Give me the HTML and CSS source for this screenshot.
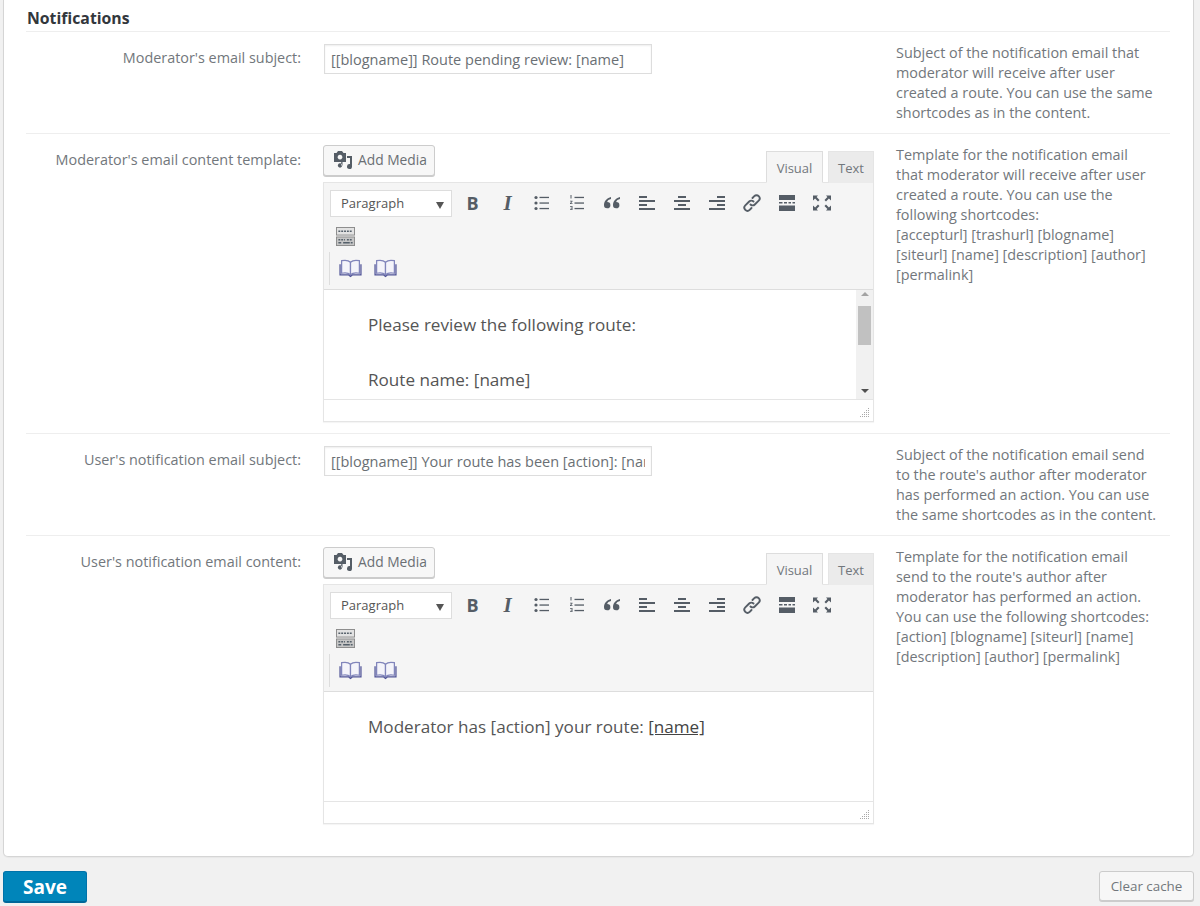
FILE: index.html
```html
<!DOCTYPE html>
<html lang="en">
<head>
<meta charset="utf-8">
<title>Notifications</title>
<link rel="stylesheet" href="styles.css">
</head>
<body>
<svg class="defs" width="0" height="0" aria-hidden="true">
  <defs>
    <symbol id="i-media" viewBox="0 0 20 20"><path fill-rule="evenodd" d="M1 3h2.500L5 1h4l1.500 2H13v9H1zM7 4.700a2.400 2.400 0 1 0 .01 0z" fill="#555d66"/><path d="M7 13.300a2.200 2.200 0 1 0 .01 0zM8.200 11h1.300v4.500H8.200z" fill="#555d66"/><path d="M14 6h5v10.500a2.500 2.500 0 1 1-2-2.400V8h-3z" fill="#555d66"/></symbol>
    <symbol id="i-ul" viewBox="0 0 20 20"><g fill="#555d66"><circle cx="4" cy="4.500" r="1.600"/><circle cx="4" cy="10" r="1.600"/><circle cx="4" cy="15.500" r="1.600"/><rect x="7.500" y="3.800" width="9.500" height="1.300"/><rect x="7.500" y="9.400" width="9.500" height="1.300"/><rect x="7.500" y="14.900" width="9.500" height="1.300"/></g></symbol>
    <symbol id="i-ol" viewBox="0 0 20 20"><g fill="#555d66"><rect x="7.500" y="3.800" width="9.500" height="1.300"/><rect x="7.500" y="9.400" width="9.500" height="1.300"/><rect x="7.500" y="14.900" width="9.500" height="1.300"/><path d="M3.500 2h1v3.500h-1zM3 7.800h2.500v.8L4 10.200h1.500v.8H3v-.8l1.500-1.600H3zM3 13h2.500v4H3v-.7h1.700v-.9H3.600v-.7h1.100v-.9H3z"/></g></symbol>
    <symbol id="i-quote" viewBox="0 0 20 20"><path d="M9 4C5.500 5 2 7.500 2 12a3.200 3.200 0 1 0 3.200-3.100C5.400 7.500 7 6.500 9 6zM18 4c-3.500 1-7 3.500-7 8a3.200 3.200 0 1 0 3.200-3.100c.2-1.400 1.800-2.400 3.800-2.900z" fill="#555d66"/></symbol>
    <symbol id="i-left" viewBox="0 0 20 20"><path d="M2 2h8v2H2zM2 6h16v2H2zM2 10h8v2H2zM2 14h16v2H2z" fill="#555d66" transform="translate(0 1)"/></symbol>
    <symbol id="i-center" viewBox="0 0 20 20"><path d="M6 2h8v2H6zM2 6h16v2H2zM6 10h8v2H6zM2 14h16v2H2z" fill="#555d66" transform="translate(0 1)"/></symbol>
    <symbol id="i-right" viewBox="0 0 20 20"><path d="M10 2h8v2h-8zM2 6h16v2H2zM10 10h8v2h-8zM2 14h16v2H2z" fill="#555d66" transform="translate(0 1)"/></symbol>
    <symbol id="i-link" viewBox="0 0 20 20"><g fill="none" stroke="#555d66" stroke-width="1.900" stroke-linecap="round"><path d="M8.500 11.500a3 3 0 0 0 4.300 0l3.900-3.900a3.100 3.100 0 0 0-4.400-4.400l-1.800 1.800"/><path d="M11.500 8.500a3 3 0 0 0-4.300 0l-3.900 3.900a3.100 3.100 0 0 0 4.400 4.400l1.800-1.800"/></g></symbol>
    <symbol id="i-more" viewBox="0 0 20 20"><path d="M2 2h16v5H2zM2 12.500h16v5.500H2zM2 9h3.500v1.600H2zM7 9h3v1.600H7zM11.500 9H14v1.600h-2.500zM15.500 9H18v1.600h-2.500z" fill="#555d66"/></symbol>
    <symbol id="i-full" viewBox="0 0 20 20"><path d="M1 2.500h5L4.600 4 7.500 7 6 8.500 3.100 5.400 1 7.500zM19 2.500v5l-2.100-2.100L14 8.500 12.500 7l2.900-3L14 2.500zM1 17.500v-5l2.100 2.100L6 11.500 7.500 13l-2.900 3L6 17.500zM19 17.500h-5l1.400-1.500-2.900-3 1.500-1.500 2.900 3.100 2.100-2.100z" fill="#555d66"/></symbol>
    <symbol id="i-kitchen" viewBox="0 0 20 20"><rect x="0.500" y="0.500" width="19" height="8" fill="#e2e2e2" stroke="#8a8a8a"/><rect x="0.500" y="10.500" width="19" height="9" fill="#c6c6c6" stroke="#8a8a8a"/><path d="M2.500 4.500h15M2.500 13.500h7m2 0h6" stroke="#55606a" stroke-width="1.500" stroke-dasharray="2 1" fill="none"/><path d="M2.500 16.500h3m2 0h7m1 0h2" stroke="#55606a" stroke-width="1.500" fill="none"/></symbol>
    <symbol id="i-book" viewBox="0 0 22 20"><g fill="#f4f4fa" stroke="#8185bb" stroke-width="1.200"><path d="M11 5C9 3 5 3 2.500 3.500V15.500C5 15 9 15 11 17z"/><path d="M11 5c2-2 6-2 8.500-1.500V15.500C17 15 13 15 11 17z"/></g><path d="M1 7v10h8l2 1.500 2-1.500h8V7" fill="none" stroke="#4e5296" stroke-width="1.200"/></symbol>
    <symbol id="i-grip" viewBox="0 0 10 10"><g fill="#a9a9a9"><rect x="8" y="0" width="1" height="1"/><rect x="6" y="2" width="1" height="1"/><rect x="8" y="2" width="1" height="1"/><rect x="4" y="4" width="1" height="1"/><rect x="6" y="4" width="1" height="1"/><rect x="8" y="4" width="1" height="1"/><rect x="2" y="6" width="1" height="1"/><rect x="4" y="6" width="1" height="1"/><rect x="6" y="6" width="1" height="1"/><rect x="8" y="6" width="1" height="1"/><rect x="0" y="8" width="1" height="1"/><rect x="2" y="8" width="1" height="1"/><rect x="4" y="8" width="1" height="1"/><rect x="6" y="8" width="1" height="1"/><rect x="8" y="8" width="1" height="1"/></g></symbol>
  </defs>
</svg>

<main class="card">
  <h2 class="section-title">Notifications</h2>

  <section class="row">
    <label class="label">Moderator's email subject:</label>
    <div class="control"><input class="text-input" type="text" value="[[blogname]] Route pending review: [name]"></div>
    <p class="help">Subject of the notification email that moderator will receive after user created a route. You can use the same shortcodes as in the content.</p>
  </section>

  <section class="row">
    <label class="label">Moderator's email content template:</label>
    <div class="control">
      <div class="editor-head">
        <button class="media-btn" type="button"><svg class="media-icon"><use href="#i-media"/></svg>Add Media</button>
        <div class="tabs"><span class="tab tab-active">Visual</span><span class="tab">Text</span></div>
      </div>
      <div class="editor">
        <div class="toolbar">
          <div class="toolbar-line">
            <div class="format">Paragraph<span class="caret"></span></div>
            <span class="tb tb-b">B</span><span class="tb tb-i">I</span>
            <svg class="tb-icon"><use href="#i-ul"/></svg><svg class="tb-icon"><use href="#i-ol"/></svg><svg class="tb-icon"><use href="#i-quote"/></svg><svg class="tb-icon"><use href="#i-left"/></svg><svg class="tb-icon"><use href="#i-center"/></svg><svg class="tb-icon"><use href="#i-right"/></svg><svg class="tb-icon"><use href="#i-link"/></svg><svg class="tb-icon"><use href="#i-more"/></svg><svg class="tb-icon"><use href="#i-full"/></svg>
          </div>
          <div class="toolbar-line line-kitchen"><svg class="kitchen"><use href="#i-kitchen"/></svg></div>
          <div class="toolbar-line line-books"><svg class="book"><use href="#i-book"/></svg><svg class="book"><use href="#i-book"/></svg></div>
        </div>
        <div class="content content-scroll">
          <div class="content-text">
            <p>Please review the following route:</p>
            <p>Route name: [name]</p>
          </div>
          <div class="scrollbar"><span class="arrow arrow-up"></span><span class="thumb"></span><span class="arrow arrow-down"></span></div>
        </div>
        <div class="statusbar"><svg class="grip"><use href="#i-grip"/></svg></div>
      </div>
    </div>
    <p class="help">Template for the notification email that moderator will receive after user created a route. You can use the following shortcodes:<br>[accepturl] [trashurl] [blogname] [siteurl] [name] [description] [author] [permalink]</p>
  </section>

  <section class="row">
    <label class="label">User's notification email subject:</label>
    <div class="control"><input class="text-input" type="text" value="[[blogname]] Your route has been [action]: [name]"></div>
    <p class="help">Subject of the notification email send to the route's author after moderator has performed an action. You can use the same shortcodes as in the content.</p>
  </section>

  <section class="row">
    <label class="label">User's notification email content:</label>
    <div class="control">
      <div class="editor-head">
        <button class="media-btn" type="button"><svg class="media-icon"><use href="#i-media"/></svg>Add Media</button>
        <div class="tabs"><span class="tab tab-active">Visual</span><span class="tab">Text</span></div>
      </div>
      <div class="editor">
        <div class="toolbar">
          <div class="toolbar-line">
            <div class="format">Paragraph<span class="caret"></span></div>
            <span class="tb tb-b">B</span><span class="tb tb-i">I</span>
            <svg class="tb-icon"><use href="#i-ul"/></svg><svg class="tb-icon"><use href="#i-ol"/></svg><svg class="tb-icon"><use href="#i-quote"/></svg><svg class="tb-icon"><use href="#i-left"/></svg><svg class="tb-icon"><use href="#i-center"/></svg><svg class="tb-icon"><use href="#i-right"/></svg><svg class="tb-icon"><use href="#i-link"/></svg><svg class="tb-icon"><use href="#i-more"/></svg><svg class="tb-icon"><use href="#i-full"/></svg>
          </div>
          <div class="toolbar-line line-kitchen"><svg class="kitchen"><use href="#i-kitchen"/></svg></div>
          <div class="toolbar-line line-books"><svg class="book"><use href="#i-book"/></svg><svg class="book"><use href="#i-book"/></svg></div>
        </div>
        <div class="content">
          <div class="content-text">
            <p>Moderator has [action] your route: <a class="shortcode-link" href="#">[name]</a></p>
          </div>
        </div>
        <div class="statusbar"><svg class="grip"><use href="#i-grip"/></svg></div>
      </div>
    </div>
    <p class="help">Template for the notification email send to the route's author after moderator has performed an action. You can use the following shortcodes:<br>[action] [blogname] [siteurl] [name] [description] [author] [permalink]</p>
  </section>
</main>

<footer class="actions">
  <button class="save-btn" type="button">Save</button>
  <button class="clear-btn" type="button">Clear cache</button>
</footer>
</body>
</html>
```

FILE: styles.css
```css
* { box-sizing: border-box; }
html, body { margin: 0; padding: 0; }
body {
  height: 906px;
  overflow: hidden;
  background: #f1f1f1;
  color: #72777c;
  font-family: "Open Sans", sans-serif;
  font-size: 14.4px;
  line-height: 20px;
}
.defs { position: absolute; }

.card {
  margin: 0 6px 0 3px;
  height: 857px;
  padding: 0 23px 0 22px;
  background: #fff;
  border: 1px solid #d5d5d5;
  border-top: 0;
  border-radius: 0 0 5px 5px;
  box-shadow: 0 1px 1px rgba(0,0,0,.04);
}
.section-title {
  margin: 0;
  height: 31px;
  padding: 8px 0 0 1px;
  font-size: 15.800px;
  line-height: 20px;
  font-weight: 700;
  color: #32373c;
}
.row {
  display: grid;
  grid-template-columns: 297px 551px 1fr;
  padding: 11px 0 10px;
  border-top: 1px solid #eee;
}
.label {
  padding: 5px 22px 0 0;
  text-align: right;
  color: #72777c;
  white-space: nowrap;
}
.control { min-width: 0; padding-bottom: 1px; }
.help {
  margin: 0;
  padding-left: 22px;
  width: 283px;
  font-size: 14.400px;
  line-height: 20px;
  color: #72777c;
}

.text-input {
  display: block;
  width: 328px;
  height: 30px;
  margin: 1px 0 0 1px;
  padding: 0 6px;
  border: 1px solid #ddd;
  background: #fff;
  box-shadow: inset 0 1px 2px rgba(0,0,0,.07);
  font-family: "Open Sans", sans-serif;
  font-size: 14.5px;
  color: #6a6f74;
  outline: 0;
}

.editor-head {
  display: flex;
  justify-content: space-between;
  align-items: flex-end;
  height: 37px;
}
.media-btn {
  display: flex;
  align-items: center;
  align-self: flex-start;
  height: 31px;
  padding: 0 7px 2px 9px;
  background: #f7f7f7;
  border: 1px solid #ccc;
  border-radius: 3px;
  box-shadow: 0 1px 0 #ccc;
  font-family: "Open Sans", sans-serif;
  font-size: 13.800px;
  color: #6a6f74;
}
.media-icon { width: 20px; height: 20px; margin-right: 5px; }
.tabs { display: flex; align-items: flex-end; position: relative; top: 1px; }
.tab {
  display: block;
  height: 32px;
  margin-left: 5px;
  padding: 6px 0 0;
  width: 46px;
  text-align: center;
  font-size: 13px;
  line-height: 20px;
  color: #72777c;
  background: #ebebeb;
  border: 1px solid #e5e5e5;
  border-bottom: 0;
}
.tab-active {
  width: 57px;
  background: #f5f5f5;
  border-color: #ddd;
  border-bottom: 1px solid #f5f5f5;
}

.editor {
  border: 1px solid #e5e5e5;
  box-shadow: 0 1px 1px rgba(0,0,0,.04);
  background: #fff;
}
.toolbar {
  height: 107px;
  background: #f5f5f5;
  border-bottom: 1px solid #ddd;
}
.toolbar-line { display: flex; align-items: center; }
.toolbar-line:first-child { padding: 5px 0 0 6px; height: 35px; }
.format {
  position: relative;
  width: 122px;
  height: 27px;
  padding-left: 10px;
  background: #fff;
  border: 1px solid #ddd;
  font-size: 13px;
  line-height: 25px;
  color: #555;
  margin-right: 3px;
}
.caret {
  position: absolute;
  right: 7px;
  top: 11px;
  border: 4px solid transparent;
  border-top: 7px solid #555;
  border-bottom: 0;
}
.tb, .tb-icon { flex: none; }
.tb {
  width: 35px;
  text-align: center;
  color: #555d66;
  font-family: "Liberation Serif", serif;
  font-size: 20px;
  font-weight: 700;
  line-height: 27px;
}
.tb-b { font-family: "Open Sans", sans-serif; font-size: 18px; width: 35px; margin-right: 1px; }
.tb-i { font-family: "Liberation Serif", serif; font-style: italic; font-size: 21px; width: 33px; }
.tb-icon { width: 20px; height: 20px; margin: 0 7.500px; }
.line-kitchen { height: 34px; padding: 2px 0 0 11px; }
.kitchen { width: 21px; height: 19px; }
.line-books {
  height: 33px;
  margin-left: 5px;
  padding: 0 0 2px 9px;
  border-left: 1px solid #ddd;
  gap: 12px;
}
.book { width: 23px; height: 21px; }

.content {
  position: relative;
  display: flex;
  height: 109px;
  overflow: hidden;
  background: #fff;
}
.content-text {
  flex: 1;
  padding: 0 0 0 44px;
  font-size: 17.100px;
  line-height: 27px;
  color: #555;
}
.content-text p { margin: 21px 0 0; }
.content-text p + p { margin-top: 28px; }
.shortcode-link { color: #444; text-decoration: underline; }
.scrollbar {
  position: relative;
  width: 17px;
  background: #f1f1f1;
}
.arrow {
  position: absolute;
  left: 5px;
  width: 0;
  height: 0;
  border: 4px solid transparent;
}
.arrow-up { top: 2px; border-top: 0; border-bottom: 4px solid #a3a3a3; }
.arrow-down { bottom: 6px; border-bottom: 0; border-top: 4px solid #505050; }
.thumb {
  position: absolute;
  left: 2px;
  top: 16px;
  width: 13px;
  height: 39px;
  background: #c1c1c1;
}
.statusbar {
  position: relative;
  height: 22px;
  border-top: 1px solid #e5e5e5;
  background: #fff;
}
.grip { position: absolute; right: 3px; bottom: 3px; width: 10px; height: 10px; }

.actions {
  display: flex;
  justify-content: space-between;
  align-items: flex-start;
  padding: 14px 6px 0 3px;
}
.save-btn {
  width: 84px;
  height: 31px;
  background: #0085ba;
  border: 1px solid #0073aa;
  border-bottom-color: #006799;
  border-radius: 3px;
  box-shadow: 0 1px 0 #006799;
  color: #fff;
  font-family: "Open Sans", sans-serif;
  font-size: 19px;
  font-weight: 700;
  padding: 0;
}
.clear-btn {
  width: 95px;
  height: 30px;
  background: #f7f7f7;
  border: 1px solid #ccc;
  border-radius: 3px;
  box-shadow: 0 1px 0 #ccc;
  color: #72777c;
  font-family: "Open Sans", sans-serif;
  font-size: 13.400px;
  padding: 0;
}
```
